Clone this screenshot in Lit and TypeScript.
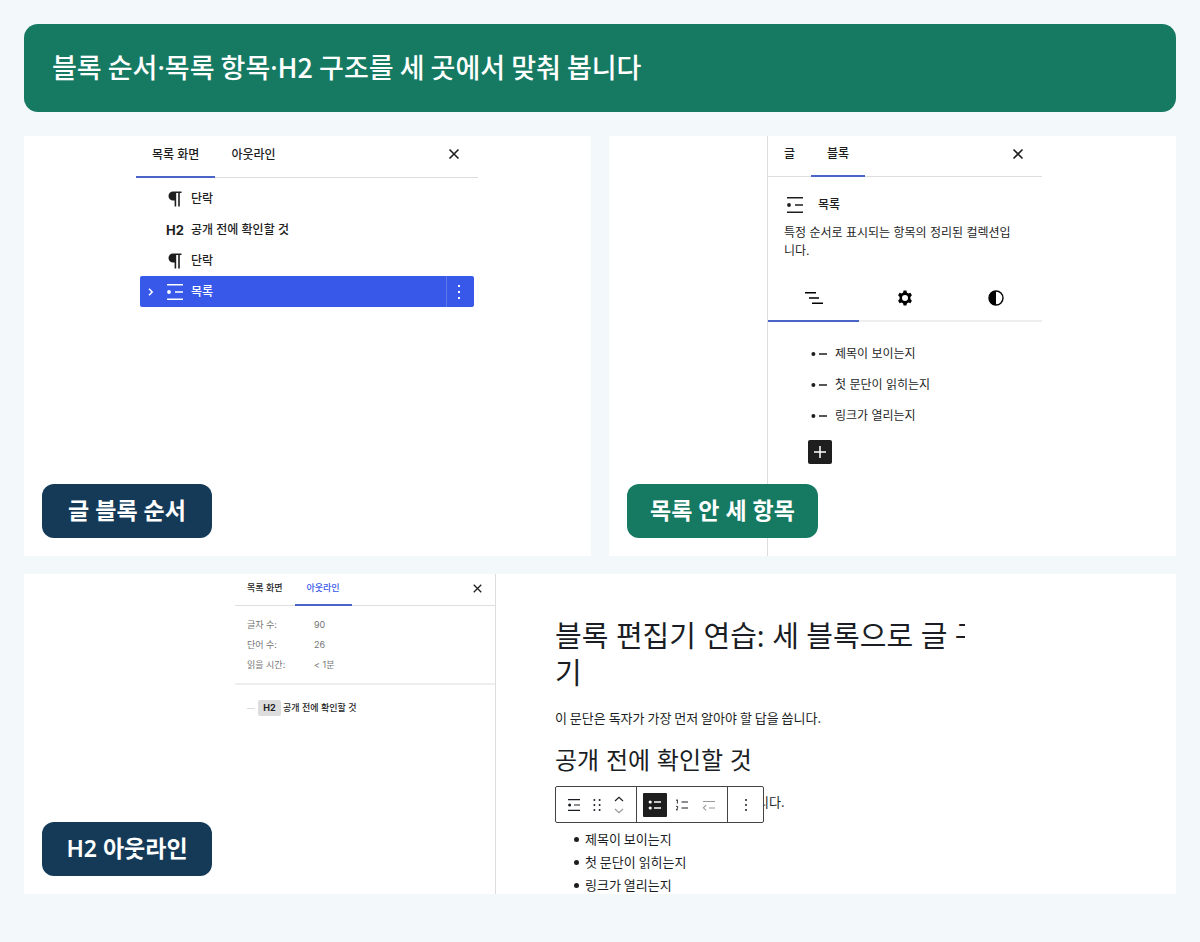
import { LitElement, html, css, svg } from "lit";
import { customElement } from "lit/decorators.js";

const closeIcon = html`<svg viewBox="0 0 12 12" width="12" height="12" aria-hidden="true">
  <path d="M1.5 1.5 10.5 10.5M10.5 1.5 1.5 10.5" stroke="currentColor" stroke-width="1.6" fill="none" />
</svg>`;

const listIcon = html`<svg viewBox="0 0 18 18" width="18" height="18" aria-hidden="true">
  <path d="M1 1.75H17M9 9H17M1 16.25H17" stroke="currentColor" stroke-width="1.5" fill="none" />
  <circle cx="3" cy="9" r="1.9" fill="currentColor" />
</svg>`;

const paragraphIcon = html`<svg viewBox="0 0 14 16" width="14" height="16" aria-hidden="true">
  <path d="M5 0.5H13.5V2H11.8V15.5H10.2V2H8.2V15.5H6.6V9.5H5A4.5 4.5 0 0 1 5 0.5Z" fill="currentColor" />
</svg>`;

const dotsIcon = html`<svg viewBox="0 0 4 16" width="4" height="16" aria-hidden="true">
  ${[2, 8, 14].map((y) => svg`<rect x="1" y=${y - 1} width="2" height="2" fill="currentColor" />`)}
</svg>`;

const chevronIcon = html`<svg viewBox="0 0 6 10" width="6" height="10" aria-hidden="true">
  <path d="M1 1.8 4.2 5 1 8.2" stroke="currentColor" stroke-width="1.5" fill="none" />
</svg>`;

const itemIcon = html`<svg viewBox="0 0 18 6" width="18" height="6" aria-hidden="true">
  <circle cx="3.4" cy="3" r="2" fill="currentColor" />
  <path d="M9 3H17" stroke="currentColor" stroke-width="1.5" />
</svg>`;

const items = ["제목이 보이는지", "첫 문단이 읽히는지", "링크가 열리는지"];

@customElement("app-root")
export class AppRoot extends LitElement {
  static styles = css`
    :host {
      display: block;
      min-height: 100vh;
      box-sizing: border-box;
      padding: 24px 24px 48px;
      background: #f3f8fb;
      color: #1e1e1e;
      font-family: Inter, "Noto Sans CJK KR", sans-serif;
      font-size: 12px;
      line-height: 18px;
    }
    * { box-sizing: border-box; }
    h1, h2, h3, p, ul, dl, dd, dt { margin: 0; padding: 0; font-weight: 400; }
    ul { list-style: none; }
    svg { display: block; flex: none; }
    button {
      display: flex;
      align-items: center;
      justify-content: center;
      margin: 0;
      padding: 0;
      border: 0;
      background: none;
      color: inherit;
      font: inherit;
      cursor: pointer;
    }
    .banner {
      display: flex;
      align-items: center;
      min-height: 88px;
      padding: 0 28px 2px;
      margin-bottom: 24px;
      border-radius: 14px;
      background: #167a62;
      color: #fff;
    }
    .banner h1 {
      font-family: "Noto Sans CJK KR", sans-serif;
      font-size: 27px;
      line-height: 40px;
      font-weight: 500;
    }
    .dot { font-family: "Noto Sans", sans-serif; }
    .grid {
      display: grid;
      grid-template-columns: 1fr 1fr;
      grid-template-rows: 420px 320px;
      gap: 18px;
    }
    .card {
      position: relative;
      display: flex;
      justify-content: center;
      overflow: hidden;
      background: #fff;
    }
    .wide { grid-column: 1 / -1; }
    .badge {
      position: absolute;
      left: 18px;
      bottom: 18px;
      min-width: 170px;
      padding: 9px 23px 11px;
      border-radius: 12px;
      background: #143a58;
      color: #fff;
      font-family: "Noto Sans", "Noto Sans CJK KR", sans-serif;
      font-size: 23px;
      line-height: 34px;
      font-weight: 600;
      text-align: center;
    }
    .green { background: #167a62; }

    .tabs {
      display: flex;
      height: 42px;
      border-bottom: 1px solid #ddd;
    }
    .tab {
      height: 42px;
      padding: 0 16px 3px;
      border-bottom: 2px solid transparent;
      font-weight: 500;
    }
    .on { border-bottom-color: #4a64c8; }
    .close { margin-left: auto; height: 36px; width: 48px; }

    .tree { width: 343px; padding-right: 1px; }
    .rows { padding: 5px 4px 0; }
    .row {
      display: flex;
      align-items: center;
      height: 31px;
      border-radius: 2px;
    }
    .row .lead { display: flex; justify-content: center; width: 26px; }
    .row .sp { display: flex; width: 22px; padding-left: 8px; }
    .row .name { margin-left: 3px; font-weight: 500; }
    .h2 { font-weight: 700; font-size: 13px; }
    .sel { background: #3858e9; color: #fff; }
    .more {
      margin-left: auto;
      height: 31px;
      width: 28px;
      padding-right: 3px;
      border-left: 1px solid #5f79ed;
    }

    .side { width: 301px; padding: 0 1px 0 25px; }
    .inspector { height: 100%; border-left: 1px solid #ddd; }
    .inspector .tabs, .inspector .tab { height: 41px; }
    .about { padding: 19px 16px 0; }
    .about .head { display: flex; align-items: center; gap: 14px; padding-left: 2px; font-weight: 500; }
    .about p { margin-top: 10px; white-space: nowrap; }
    .modes {
      display: grid;
      grid-template-columns: 1fr 1fr 1fr;
      margin-top: 16px;
      border-bottom: 2px solid #eee;
    }
    .modes button { height: 46px; margin-bottom: -2px; border-bottom: 2px solid transparent; }
    .modes .on { border-bottom-color: #4a64c8; }
    .items { padding: 16px 0 0 42px; }
    .items li { display: flex; align-items: center; gap: 7px; height: 31px; }
    .add {
      width: 24px;
      height: 24px;
      margin: 9px 0 0 40px;
      border-radius: 2px;
      background: #1e1e1e;
      color: #fff;
    }

    .editor { display: flex; width: 730px; overflow: hidden; }
    .outline { flex: none; width: 261px; border-right: 1px solid #ddd; font-size: 9px; }
    .outline .tabs { height: 32px; }
    .outline .tab { height: 32px; padding: 0 12px 2px; }
    .outline .on { color: #3858e9; }
    .outline .close { height: 28px; width: 36px; }
    .stats {
      display: grid;
      grid-template-columns: 67px 1fr;
      padding: 9px 12px 8px;
      border-bottom: 2px solid #eee;
      line-height: 20px;
      color: #757575;
    }
    .entry { display: flex; align-items: center; padding: 14px 12px; font-weight: 500; }
    .dash { width: 8px; height: 1px; margin-right: 3px; background: #ddd; }
    .tag {
      width: 23px;
      height: 16px;
      margin-right: 2px;
      border-radius: 2px;
      background: #ddd;
      font-weight: 700;
      line-height: 16px;
      text-align: center;
    }
    .page {
      flex: 1;
      min-width: 0;
      padding: 43px 0 0 59px;
      font-family: "Noto Sans CJK KR", sans-serif;
      font-size: 13px;
      color: #1a1e24;
    }
    .title { font-family: "Noto Sans", "Noto Sans CJK KR", sans-serif; font-size: 29px; line-height: 37px; white-space: nowrap; }
    .page p { line-height: 20px; }
    .title + p { margin-top: 17px; }
    .page h3 { margin-top: 15px; font-family: Inter, "Noto Sans CJK KR", sans-serif; font-size: 24px; line-height: 36px; }
    .covered { position: relative; margin-top: 13px; }
    .covered p { padding-left: 202px; }
    .toolbar {
      position: absolute;
      top: -6px;
      left: 0;
      display: flex;
      width: 209px;
      height: 37px;
      border: 1px solid #444;
      border-radius: 2px;
      background: #fff;
    }
    .group { display: flex; align-items: center; }
    .group + .group { border-left: 1px solid #444; }
    .group button { height: 24px; }
    .g1 { width: 80px; padding-left: 6px; }
    .g1 button { width: 22px; }
    .g1 button:first-child { width: 24px; }
    .g2 { width: 91px; padding-left: 6px; }
    .g2 button { width: 24px; margin-right: 3px; }
    .g2 .dark { background: #1e1e1e; color: #fff; border-radius: 1px; }
    .dim { color: #999; }
    .g3 { flex: 1; justify-content: center; }
    .bullets { margin-top: 15px; }
    .bullets li { display: flex; align-items: center; line-height: 23px; padding-left: 19px; }
    .bullets li::before {
      content: "";
      width: 5px;
      height: 5px;
      margin: 2px 6px 0 0;
      border-radius: 50%;
      background: #1e1e1e;
    }
  `;

  private treeCard() {
    return html`<section class="card">
      <div class="tree">
        <div class="tabs">
          <button class="tab on">목록 화면</button>
          <button class="tab">아웃라인</button>
          <button class="close" aria-label="닫기">${closeIcon}</button>
        </div>
        <div class="rows">
          <div class="row"><span class="sp"></span><span class="lead">${paragraphIcon}</span><span class="name">단락</span></div>
          <div class="row"><span class="sp"></span><span class="lead h2">H2</span><span class="name">공개 전에 확인할 것</span></div>
          <div class="row"><span class="sp"></span><span class="lead">${paragraphIcon}</span><span class="name">단락</span></div>
          <div class="row sel">
            <span class="sp">${chevronIcon}</span><span class="lead">${listIcon}</span><span class="name">목록</span>
            <button class="more" aria-label="옵션">${dotsIcon}</button>
          </div>
        </div>
      </div>
      <div class="badge">글 블록 순서</div>
    </section>`;
  }

  private inspectorCard() {
    return html`<section class="card">
      <div class="side">
        <div class="inspector">
          <div class="tabs">
            <button class="tab">글</button>
            <button class="tab on">블록</button>
            <button class="close" aria-label="닫기">${closeIcon}</button>
          </div>
          <div class="about">
            <div class="head">${listIcon}<span>목록</span></div>
            <p>특정 순서로 표시되는 항목의 정리된 컬렉션입<br />니다.</p>
          </div>
          <div class="modes">
            <button class="on" aria-label="목록 보기">
              <svg viewBox="0 0 18 14" width="18" height="14">
                <path d="M0 1.75H11M4 7H14M7 12.25H18" stroke="#000" stroke-width="1.5" />
              </svg>
            </button>
            <button aria-label="설정">
              <svg viewBox="0 0 16 16" width="16" height="16">
                <path
                  fill="#000"
                  fill-rule="evenodd"
                  d="M6.6 0.5H9.4L9.9 2.5 11.4 3.4 13.4 2.8 14.9 5.3 13.4 6.9V9.1L14.9 10.7 13.4 13.2 11.4 12.6 9.9 13.5 9.4 15.5H6.6L6.1 13.5 4.6 12.6 2.6 13.2 1.1 10.7 2.6 9.1V6.9L1.1 5.3 2.6 2.8 4.6 3.4 6.1 2.5ZM8 5A3 3 0 1 0 8 11A3 3 0 1 0 8 5Z"
                />
              </svg>
            </button>
            <button aria-label="스타일">
              <svg viewBox="0 0 16 16" width="16" height="16">
                <circle cx="8" cy="8" r="7" fill="none" stroke="#000" stroke-width="1.4" />
                <path d="M8 1A7 7 0 0 0 8 15Z" fill="#000" />
              </svg>
            </button>
          </div>
          <ul class="items">
            ${items.map((t) => html`<li>${itemIcon}<span>${t}</span></li>`)}
          </ul>
          <button class="add" aria-label="추가">
            <svg viewBox="0 0 12 12" width="12" height="12">
              <path d="M6 0V12M0 6H12" stroke="currentColor" stroke-width="1.5" />
            </svg>
          </button>
        </div>
      </div>
      <div class="badge green">목록 안 세 항목</div>
    </section>`;
  }

  private toolbar() {
    return html`<div class="toolbar" role="toolbar" aria-label="블록 도구">
      <div class="group g1">
        <button aria-label="목록">
          <svg viewBox="0 0 12 12" width="12" height="12">
            <path d="M0 0.6H12M6 6H12M0 11.4H12" stroke="currentColor" stroke-width="1.2" />
            <circle cx="1.6" cy="6" r="1.5" fill="currentColor" />
          </svg>
        </button>
        <button aria-label="드래그">
          <svg viewBox="0 0 8 12" width="8" height="12">
            ${[1, 6, 11].map(
              (y) => svg`<circle cx="1.4" cy=${y} r="1" fill="currentColor" /><circle cx="6.6" cy=${y} r="1" fill="currentColor" />`
            )}
          </svg>
        </button>
        <button aria-label="이동">
          <svg viewBox="0 0 10 18" width="10" height="18" fill="none" stroke-width="1.2">
            <path d="M1 5 5 1.4 9 5" stroke="#1e1e1e" />
            <path d="M1 13 5 16.6 9 13" stroke="#999" />
          </svg>
        </button>
      </div>
      <div class="group g2">
        <button class="dark" aria-label="글머리 기호 목록">
          <svg viewBox="0 0 14 10" width="14" height="10">
            <path d="M6 2H13M6 8H13" stroke="currentColor" stroke-width="1.3" />
            <circle cx="2.2" cy="2" r="1.6" fill="currentColor" />
            <circle cx="2.2" cy="8" r="1.6" fill="currentColor" />
          </svg>
        </button>
        <button aria-label="번호 목록">
          <svg viewBox="0 0 14 12" width="14" height="12" fill="none" stroke="currentColor">
            <path d="M6.5 3H13M6.5 9H13" stroke-width="1.2" />
            <path d="M1 1.4 2.4 0.8V4.6M1 7.4H2.6V9L1.2 10.8H3" stroke-width="0.9" />
          </svg>
        </button>
        <button class="dim" aria-label="내어쓰기">
          <svg viewBox="0 0 14 12" width="14" height="12" fill="none" stroke="currentColor" stroke-width="1.1">
            <path d="M1 2.5H13M7 9H13M4.2 6.2 1.4 8.8 4.2 11.4" />
          </svg>
        </button>
      </div>
      <div class="group g3">
        <button aria-label="옵션">
          <svg viewBox="0 0 4 12" width="4" height="12">
            ${[1, 6, 11].map((y) => svg`<circle cx="2" cy=${y} r="1" fill="currentColor" />`)}
          </svg>
        </button>
      </div>
    </div>`;
  }

  private editorCard() {
    return html`<section class="card wide">
      <div class="editor">
        <div class="outline">
          <div class="tabs">
            <button class="tab">목록 화면</button>
            <button class="tab on">아웃라인</button>
            <button class="close" aria-label="닫기">
              <svg viewBox="0 0 12 12" width="9" height="9"><path d="M1 1 11 11M11 1 1 11" stroke="#1e1e1e" stroke-width="1.7" /></svg>
            </button>
          </div>
          <dl class="stats">
            <dt>글자 수:</dt><dd>90</dd>
            <dt>단어 수:</dt><dd>26</dd>
            <dt>읽을 시간:</dt><dd>&lt; 1분</dd>
          </dl>
          <div class="entry"><span class="dash"></span><span class="tag">H2</span><span>공개 전에 확인할 것</span></div>
        </div>
        <article class="page">
          <h2 class="title">블록 편집기 연습: 세 블록으로 글 구<br />기</h2>
          <p>이 문단은 독자가 가장 먼저 알아야 할 답을 씁니다.</p>
          <h3>공개 전에 확인할 것</h3>
          <div class="covered">
            <p>니다.</p>
            ${this.toolbar()}
          </div>
          <ul class="bullets">
            ${items.map((t) => html`<li>${t}</li>`)}
          </ul>
        </article>
      </div>
      <div class="badge">H2 아웃라인</div>
    </section>`;
  }

  render() {
    const dot = html`<span class="dot">·</span>`;
    return html`
      <header class="banner"><h1>블록 순서${dot}목록 항목${dot}H2 구조를 세 곳에서 맞춰 봅니다</h1></header>
      <main class="grid">${this.treeCard()}${this.inspectorCard()}${this.editorCard()}</main>
    `;
  }
}
